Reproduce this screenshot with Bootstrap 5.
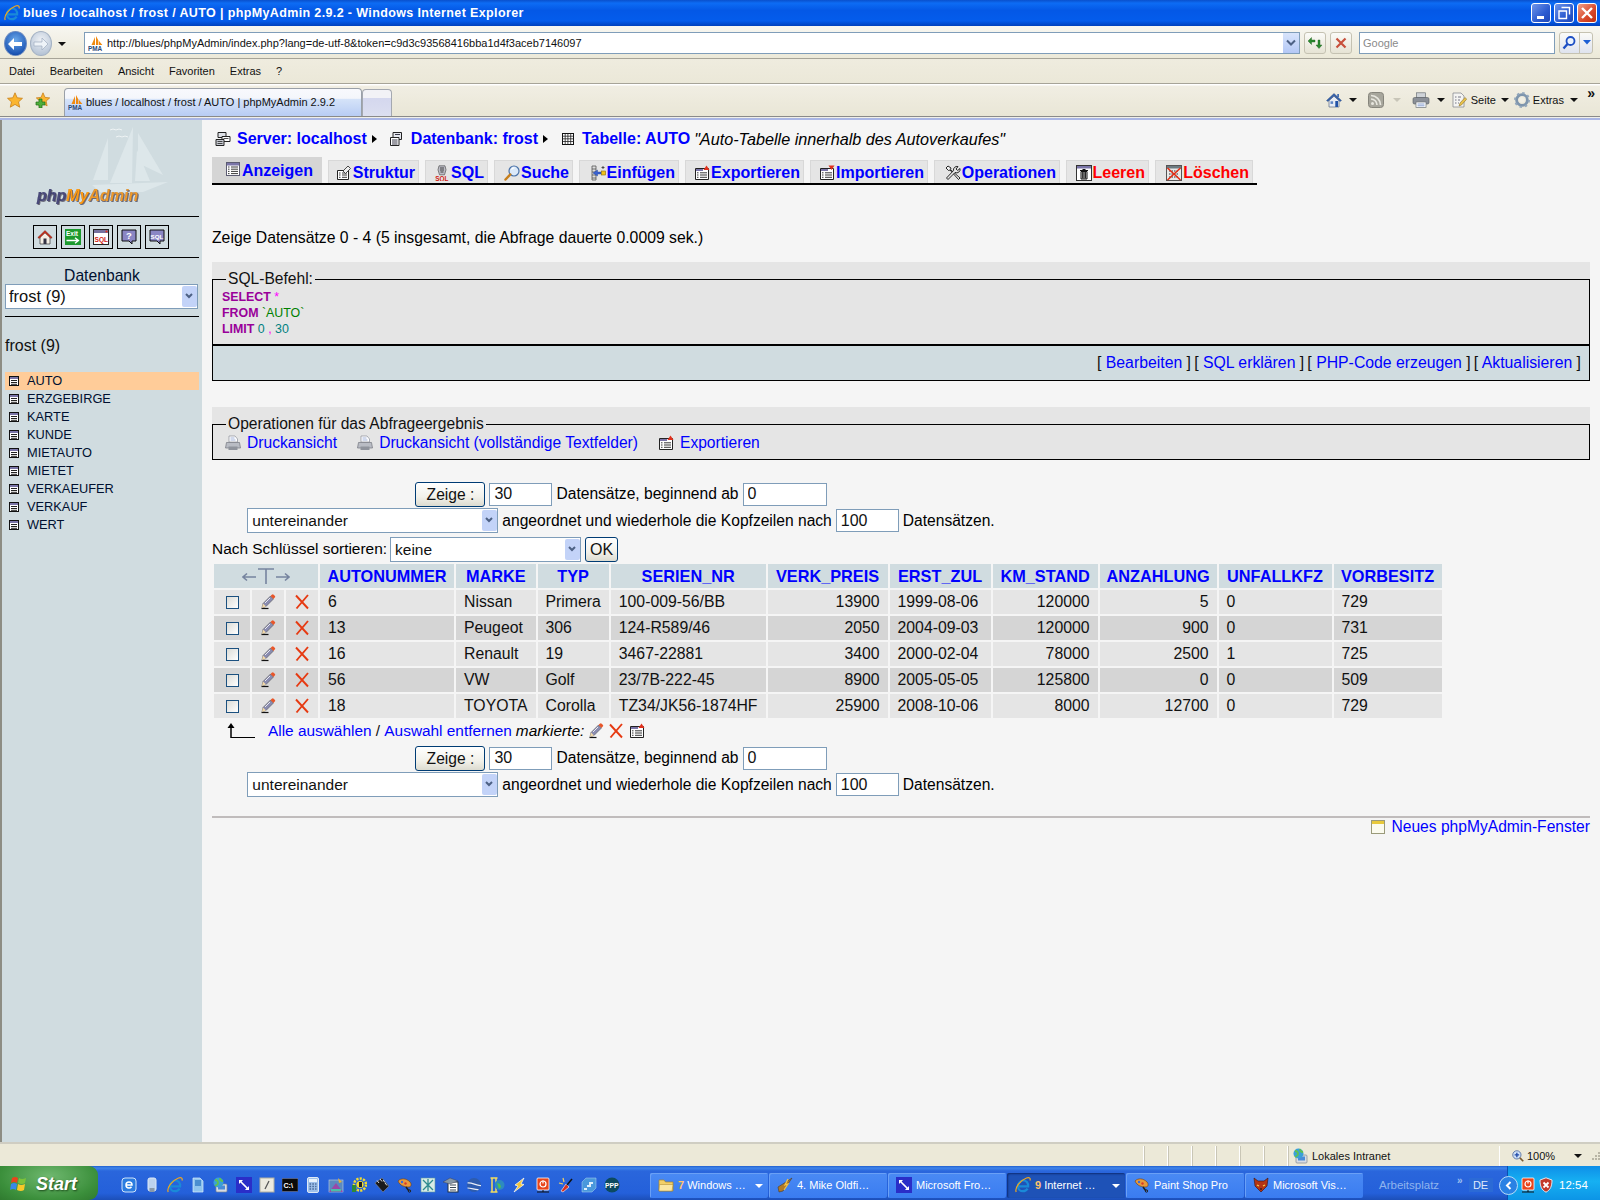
<!DOCTYPE html>
<html lang="de">
<head>
<meta charset="utf-8">
<title>blues / localhost / frost / AUTO | phpMyAdmin 2.9.2</title>
<link href="https://cdn.jsdelivr.net/npm/bootstrap@5.3.0/dist/css/bootstrap.min.css" rel="stylesheet">
<style>
html,body{height:1200px;overflow:hidden}
body{font:16px/18px "Liberation Sans",Arial,sans-serif;color:#000;background:#ece9d8}
a{color:#00f;text-decoration:none}
.app{width:1600px;height:1200px}
.i16{width:16px;height:16px;flex:none;display:inline-block}
.i12{width:12px;height:12px;flex:none}
.i10{width:10px;height:10px;flex:none}
.chrome{font:11px/14px "Liberation Sans",Arial,sans-serif;color:#111}
.caret-d{width:0;height:0;border:4px solid transparent;border-top-color:#111;border-bottom:0;flex:none}
.caret-d.faint{border-top-color:#c8c5b8}

/* title bar */
.titlebar{height:26px;background:linear-gradient(180deg,#0a50cc,#0d6cf4 12%,#0458e6 40%,#045cec 80%,#0040bc);color:#fff;font:700 12.5px/26px "Liberation Sans",Arial,sans-serif;letter-spacing:.37px;padding-left:4px;gap:3px}
.winbtns{margin-left:auto;gap:3px;padding-right:3px}
.winbtn{width:20px;height:20px;border:1px solid #fff;border-radius:3px;background:linear-gradient(135deg,#6f95ea,#2c5bd0 60%,#1f48b8)}
.winbtn.close{background:linear-gradient(135deg,#f0a088,#d8482a 60%,#c03010)}

/* address */
.addr{height:33px;background:linear-gradient(180deg,#f7f6f1,#ece9d8);border-bottom:1px solid #a7a498;padding-top:6px}
.navcaps{width:66px;padding-left:4px;gap:3px;margin-right:19px}
.navbtn{width:25px;height:25px;border-radius:50%;margin-top:-1px}
.navbtn.back{background:radial-gradient(circle at 50% 35%,#6aa8ea,#1c55b4 75%,#0f3a88);border:1px solid #6a8ac0}
.navbtn.fwd{background:radial-gradient(circle at 50% 35%,#eef1f5,#b6c4d6 80%);border:1px solid #a4b2c4}
.urlbox{width:1216px;height:22px;background:#fff;border:1px solid #7f9db9;padding-left:3px;gap:3px;font-size:11px;line-height:20px;margin-left:-1px}
.ddbtn{width:16px;height:20px;margin-left:auto;background:linear-gradient(#d8e4fb,#b4c8f6)}
.toolb{width:22px;height:22px;border:1px solid #c5c2b2;border-radius:3px;background:linear-gradient(#fbfbf8,#e6e3d4);margin-left:4px}
.toolb.s2{margin-left:4px}
.searchbox{width:196px;height:22px;background:#fff;border:1px solid #7f9db9;color:#8a8a8a;padding-left:3px;font-size:11px;line-height:20px;margin-left:7px}
.searchgo{width:34px;height:22px;border:1px solid #c5c2b2;border-radius:3px;background:linear-gradient(#fbfbf8,#dfe3ee);margin-left:4px}
.searchgo .cell{width:22px;height:20px;border-right:1px solid #c5c2b2}

/* menu */
.menubar{height:25px;background:linear-gradient(#efecdf,#ebe8d8);border-bottom:1px solid #a7a498;padding-left:9px;line-height:24px}
.menubar span{margin-right:15px}

/* toolbar */
.tabbar{height:32px;background:linear-gradient(#fff 0,#fff 1px,#f1eee3 2px,#e9e6d6);align-items:flex-end;position:relative}
.favs{gap:11px;padding:0 14px 8px 7px;align-self:flex-end}
.ietab{width:298px;height:28px;background:linear-gradient(#f8f9fd 0,#f4f6fb 35%,#d6e4f9 36%,#b8ccf4);border:1px solid #9aa0a8;border-bottom:0;border-radius:4px 4px 0 0;padding:0 0 2px 3px;gap:2px;font-size:11px;align-items:center}
.ietab2{width:30px;height:27px;background:linear-gradient(#f2f2f6 0,#f2f2f6 30%,#d4d7ee 31%,#dcdff0);border:1px solid #a4a8b0;border-bottom:0;border-radius:4px 4px 0 0}
.tools{margin-left:auto;padding:0 0 8px 0;align-items:center;position:relative}
.more{position:absolute;right:5px;top:3px;font:700 14px/12px "Liberation Sans",sans-serif}
.ml2{margin-left:2px}.ml3{margin-left:3px}.ml4{margin-left:4px}.ml5{margin-left:5px}.ml6{margin-left:6px}.ml7{margin-left:7px}.ml9{margin-left:9px}.ml11{margin-left:11px}.ml16{margin-left:16px}
.mr22{margin-right:22px}
.tabline{height:4px;background:linear-gradient(#8a8a8a 0,#8a8a8a 1px,#f0efe8 1px,#f0efe8 2px,#aab6e4 2px)}

/* page */
.page{min-height:0}
.side{width:202px;flex:none;background:#d0dce0;border-left:2px solid #8d8d84;color:#001030}
.logo{height:96px;display:block}
.logotext{filter:drop-shadow(1px 1px 0 #6a6a7a)}
.side hr{margin:0 3px;opacity:1;border:0;border-top:1px solid #000;height:1px}
.sideicons{height:40px;gap:4px;padding-right:2px}
.sidebox{width:24px;height:24px;border:1px solid #000}
.dbhead{height:17px;line-height:18px;padding-top:9px;font-size:15.7px;box-sizing:content-box}
.side .form-select{width:193px;margin:0 0 7px 3px;font-size:16.5px;padding-left:3px}
.count{margin:20px 0 17px 3px;height:18px;color:#111}
.tbls{font-size:12.8px;line-height:18px;margin:0 3px}
.tbls li{height:18px;padding-left:4px;gap:8px}
.tbls li.cur{background:#fc9}

.content{background:#f5f5f5;padding:9px 10px 0;min-width:0;font-size:15.6px}
.crumb{height:20px;font-weight:700;font-size:16px;line-height:20px;gap:4px;margin-left:3px}
.crumb i{font-style:italic;font-weight:400;font-size:16.2px}
.tri{width:0;height:0;border:4px solid transparent;border-left:5px solid #000;border-right:0;margin-left:1px}
.crumb .sp{margin-left:8px}
.pma-tabs{border-bottom:2px solid #000;margin-top:8px;width:1045px;height:28px;gap:6px;align-items:flex-end;flex-wrap:nowrap;padding:0}
.pma-tabs .nav-link{background:#e5e5e5;border:1px solid #d8d8d8;border-bottom:0;height:23px;font-weight:700;font-size:16px;color:#00f;padding:2px 3px 0 0;border-radius:0;display:flex;align-items:center;justify-content:flex-end;gap:1px;line-height:20px;margin:0}
.pma-tabs .nav-link.red{color:#f00}
.pma-tabs .nav-link.active{background:#d5d5d5;height:26px;align-items:flex-start;border-color:#d5d5d5;color:#00f;padding:3px 8px 0 0}
.t1{width:110px}.t2{width:91px}.t3{width:63px}.t4{width:79px}.t5{width:100px}.t6{width:119px}.t7{width:118px}.t8{width:126px}.t9{width:83px}.t10{width:98px}
.result{margin-top:44px;height:18px;font-size:15.75px}

.sqlbg{background:#e5e5e5;padding-top:8px;margin-top:15px}
.sqlbg fieldset,.opbg fieldset{border:1px solid #000;margin:0;padding:0 9px;min-width:0}
fieldset legend{float:none;width:auto;font-size:15.6px;line-height:18px;margin:0 0 0 4px;padding:0 2px;color:#111}
.sqlbg fieldset{border-bottom:2px solid #000;padding-bottom:7px}
.sql{font-size:12.4px;line-height:16px;font-weight:400;color:#909;padding-top:1px}
.sql b{color:#909}
.sql .p{color:#f0f}.sql .s{color:#008000}.sql .n{color:#008080}
.sqltools{height:35px;background:#d0dce0;border:1px solid #000;border-top:0;padding-right:8px;gap:.2em;line-height:34px;color:#111;font-size:15.8px}
.opbg{background:#e5e5e5;padding-top:8px;margin-top:26px}
.opbg fieldset{padding-bottom:7px}
.opbg legend{margin-bottom:1px}
.ops{height:18px;padding-left:3px;align-items:center}
.ops a{margin-left:6px;margin-right:20px}

.navform{width:818px;margin-top:21px}
.row-f{height:26.5px;gap:4px;align-items:center;justify-content:center}
.navform .form-control,.fs .form-control{height:23px;border:1px solid #7f9db9;border-radius:0;padding:0 4px;font-size:16px;line-height:21px;color:#111;background:#fff;min-height:0}
.inw-s{width:63px!important}.inw-m{width:84px!important}
.form-select{height:25px;border:1px solid #7f9db9;border-radius:0;padding:0 18px 0 4px;font-size:15.5px;line-height:23px;color:#111;background-color:#fff;background-image:url("data:image/svg+xml,%3Csvg xmlns='http://www.w3.org/2000/svg' width='16' height='23'%3E%3Crect x='1' y='1' width='15' height='21' rx='2' fill='%23c3d3f8'/%3E%3Cpath d='M5 9l3 3 3-3' fill='none' stroke='%234d6185' stroke-width='2'/%3E%3C/svg%3E");background-repeat:no-repeat;background-position:right 0 center;background-size:16px 23px}
.sel-l{width:251px!important}.sel-k{width:191px!important}
.btn-xp{height:25px;width:70px;padding:0;border:1px solid #003c74;border-radius:3px;background:linear-gradient(#fff,#f2f1ea 60%,#dcdbd0);font-size:15.6px;line-height:21px;color:#111}
.btn-xp.ok{width:33px;font-size:16px;margin-left:1px}
.btn-xp:hover{border-color:#003c74;color:#111}
.sortf{height:26px;gap:3px;margin-top:2px;align-items:center;font-size:15.45px}
.data.table{width:auto;table-layout:fixed;border-collapse:separate;border-spacing:2px;margin:0;font-size:15.8px;line-height:18px;color:#111}
.data.table>:not(caption)>*>*{padding:3px 8px;border:0;box-shadow:none;height:24px;background:transparent;color:#111;white-space:nowrap;vertical-align:middle}
.data.table>thead>tr>th{background:#d0dce0;font-weight:700;font-size:16.3px;text-align:center;padding:3px 0}
.data.table>thead a{color:#00f}
.data.table>tbody>tr:nth-child(odd)>td{background:#e5e5e5}
.data.table>tbody>tr:nth-child(even)>td{background:#d5d5d5}
.data.table>tbody>tr>td.act{padding:0 0 1px;text-align:center;line-height:0}
.c1{width:36px}.c2,.c3{width:32px}.c4{width:134px}.c5{width:75px}.c6{width:71px}.c7{width:154px}.c8{width:120px}.c9{width:101px}.c10{width:105px}.c11{width:117px}.c12{width:113px}.c13{width:108px}
.form-check-input.xp{width:13px;height:13px;margin:1px 0 0;border:1px solid #1c5180;border-radius:0;background:linear-gradient(135deg,#dcdcd7,#fff)}
.acts{height:22px;align-items:center;padding-left:15px;font-size:15.4px}
.acts .lk{margin-left:13px;color:#111;gap:0}
.acts em{margin-left:4px;margin-right:4px}
.navform.b{margin-top:3px}
.divider{border:0;border-top:2px solid #c0bcbc;opacity:1;margin:18px 0 0}
.newwin{height:18px;margin-top:0;gap:6px}

/* status */
.statusbar{height:24px;border-top:2px solid #cfcdc2;background:#ece9d8;position:relative;font-size:11px;line-height:22px;padding-top:1px}
.stat{width:24px;height:20px;border-right:1px solid #fff;box-shadow:1px 0 0 #c9c6b6}
.stat.first{width:1144px}
.zone{width:212px;padding-left:5px;gap:3px;border-right:1px solid #fff;height:20px}
.zoom{padding-left:12px;gap:3px;width:88px}
.grip{margin-left:auto;width:10px}

/* taskbar */
.taskbar{height:34px;background:linear-gradient(#1f5fd0 0,#3f85ea 2px,#2a66dc 5px,#2460da 80%,#1c4fb8);color:#fff;font-size:11px;flex:none}
.start{width:98px;height:34px;background:radial-gradient(ellipse at 50% 30%,#6fb86f,#3b8f3b 70%,#2f7a2f);border-radius:0 9px 9px 0;font:italic 700 18px/36px "Liberation Sans",sans-serif;color:#fff;text-shadow:1px 1px 2px #1b4a1b;padding:2px 0 0 10px;gap:6px}
.quick{gap:7px;margin:4px 0 0 23px;width:529px;position:relative}
.tb-btn{width:118px;height:25px;background:linear-gradient(#4a8af4,#3a7cf0);border-radius:2px;padding-left:8px;gap:4px;color:#fff;box-shadow:inset 1px 1px 0 #6aa0f6;position:relative;line-height:25px;white-space:nowrap}
.tb-btn.on{background:#1e52b7;box-shadow:inset 1px 1px 2px #0e2c74}
.tb-btn b{color:#ffc46a}
.caret-w{width:0;height:0;border:4px solid transparent;border-top-color:#fff;border-bottom:0;position:absolute;right:5px;top:11px}
.tasks{gap:1px;align-items:center;margin-top:4px}
.dim{color:#8fb4ee;margin:4px 0 0 16px;font-size:11.5px;width:58px}
.raq{color:#9fc0f0;margin:-4px 0 0 20px;font-weight:700;font-size:10px}
.lang{margin:4px 0 0 6px;background:#2b6ad6;padding:0 2px;color:#dfe9fb;width:24px}
.tray{margin-left:auto;width:93px;height:34px;background:linear-gradient(#0e8fe8,#16b0f2 45%,#0c94e6);border-left:1px solid #0a4fb0;gap:2px;padding-top:4px;position:relative;font-size:11.5px}
.chev{width:19px;height:19px;border-radius:50%;background:#2a82e4;border:1px solid #b8dcf8;margin-left:-9px;flex:none}
</style>
</head>
<body>
<svg width="0" height="0" class="position-absolute" aria-hidden="true">
<defs>
<symbol id="ie" viewBox="0 0 16 16"><path d="M3.5 9.3h9.6c.3-3.5-2-5.8-4.8-5.8S3 6 3 9.2s2.3 5 5 5c2.2 0 3.6-1 4.6-2.6" fill="none" stroke="#1a8ad8" stroke-width="2.2"/><path d="M1.2 15C-.5 11 5 3.5 11.5 1c2.8-1 4.2 0 3.5 2.5" fill="none" stroke="#f2a71c" stroke-width="1.2"/></symbol>
<symbol id="pma" viewBox="0 0 16 16"><path d="M3.5 10 7 2v8zM8 10V1l2.4 4.5V10zM11 10V6l3.4 4z" fill="#f08a10"/><text x="0" y="15.6" font-size="6.4" font-weight="700" font-family="Liberation Sans" fill="#2b4a78">PMA</text></symbol>
<symbol id="star" viewBox="0 0 16 16"><path d="M8 .8l2.2 5 5.3.5-4 3.6 1.2 5.3L8 12.400 3.300 15.200l1.200-5.300-4-3.600 5.300-.5z" fill="#fbb52f" stroke="#c8801a" stroke-width=".8"/></symbol>
<symbol id="starp" viewBox="0 0 16 16"><path d="M9 .8l2 4.600 4.700.5-3.600 3.200 1 4.800L9 11.500 4.900 13.900l1-4.800-3.600-3.200 4.700-.5z" fill="#fbb52f" stroke="#c8801a" stroke-width=".8"/><path d="M5 7v3H2v3h3v3h3v-3h3v-3H8V7z" fill="#4fae3a" stroke="#1f6d1a" stroke-width=".7"/></symbol>
<symbol id="home" viewBox="0 0 16 16"><path d="M3 8.500 8 4.200l5 4.300V15H3z" fill="#e8ecf4" stroke="#5a6a85" stroke-width=".7"/><path d="M.5 8.500 8 1.500l7.500 7-1.400 1L8 3.800 1.900 9.500z" fill="#3562ac" stroke="#1c3a74" stroke-width=".4"/><rect x="9.300" y="9" width="2.700" height="6" fill="#2353a6"/><rect x="4.500" y="9.300" width="2.600" height="2.600" fill="#5d84c4"/><rect x="11.300" y="2" width="1.600" height="3" fill="#3562ac"/></symbol>
<symbol id="rss" viewBox="0 0 16 16"><rect x=".5" y=".5" width="15" height="15" rx="3" fill="#a7a69c" stroke="#86857c"/><circle cx="4.500" cy="11.500" r="1.500" fill="#e8e7df"/><path d="M3 7a6 6 0 0 1 6 6M3 3.500A9.500 9.500 0 0 1 12.500 13" fill="none" stroke="#e8e7df" stroke-width="1.700"/></symbol>
<symbol id="print" viewBox="0 0 18 16"><rect x="4.500" y=".8" width="9" height="5" fill="#cfd3d8" stroke="#6c7278" stroke-width=".7"/><rect x="1" y="5.500" width="16" height="6.500" rx="1.500" fill="#8b9098" stroke="#555a60" stroke-width=".6"/><rect x="4" y="10" width="10" height="5.500" fill="#fff" stroke="#6c7278" stroke-width=".7"/><path d="M5.500 12h7M5.500 13.800h7" stroke="#5577bb" stroke-width=".7"/></symbol>
<symbol id="pagei" viewBox="0 0 16 16"><path d="M2 1h8l3 3v11H2z" fill="#f4f4f2" stroke="#7c8088" stroke-width=".7"/><path d="M4 5h1.500M7 5h3M4 8h1.500M7 8h2M4 11h1.500M7 11h1" stroke="#667" stroke-width=".9"/><path d="M8 14l1-3 5-5.500 1.700 1.700L10.500 13z" fill="#e9c24a" stroke="#7a6020" stroke-width=".5"/></symbol>
<symbol id="gear" viewBox="0 0 16 16"><circle cx="8" cy="8" r="5.400" fill="none" stroke="#7e95ad" stroke-width="2.800"/><circle cx="8" cy="8" r="7" fill="none" stroke="#93a7bb" stroke-width="2" stroke-dasharray="2.400 3.100"/><circle cx="8" cy="8" r="2.600" fill="#f1efe5"/></symbol>
<symbol id="tbl" viewBox="0 0 10 10"><rect x=".5" y=".5" width="9" height="9" fill="#fff" stroke="#111"/><rect x="1" y="1" width="8" height="2" fill="#7a75a8"/><path d="M2 4.500h6M2 6.500h6M2 8.300h6" stroke="#222"/></symbol>
<symbol id="side-home" viewBox="0 0 16 16"><path d="M3 8v7h10V8L8 3.500z" fill="#f4efe4" stroke="#333" stroke-width=".7"/><path d="M.8 8.500 8 1.500l7.200 7-1.300 1L8 3.800 2.100 9.500z" fill="#c7301c" stroke="#5a120a" stroke-width=".4"/><rect x="6.500" y="9.500" width="3" height="5.500" fill="#334"/></symbol>
<symbol id="side-exit" viewBox="0 0 16 16"><rect width="16" height="16" fill="#1c9a2e"/><text x="1" y="6.500" font-size="6.500" font-weight="700" font-family="Liberation Sans" fill="#fff">Exit</text><path d="M1.500 11.500h11M10 8.800l3.500 2.700-3.500 2.700" stroke="#fff" fill="none" stroke-width="1.300"/></symbol>
<symbol id="side-sql" viewBox="0 0 16 16"><rect x=".5" y=".5" width="15" height="15" fill="#fff" stroke="#222"/><rect x="1" y="1" width="14" height="3" fill="#77729f"/><circle cx="13.500" cy="2.500" r="1.100" fill="#e03020"/><text x="1.600" y="12.500" font-size="6.600" font-weight="700" font-family="Liberation Sans" fill="#d01810">SQL</text></symbol>
<symbol id="side-help" viewBox="0 0 16 16"><path d="M1 1h14v11h-4v3l-3-3H1z" fill="#8a86c4" stroke="#111"/><text x="5" y="10" font-size="9.500" font-weight="700" font-family="Liberation Sans" fill="#fff">?</text></symbol>
<symbol id="side-sqlq" viewBox="0 0 16 16"><path d="M1 1h14v11h-4v3l-3-3H1z" fill="#8a86c4" stroke="#111"/><text x="1.500" y="9.500" font-size="6.200" font-weight="700" font-family="Liberation Sans" fill="#fff">SQL</text></symbol>
<symbol id="srv" viewBox="0 0 16 16"><path d="M3 1.500h8v5H3z" fill="#dfe2e8" stroke="#222"/><path d="M7 5.500h8v5H7z" fill="#fff" stroke="#222"/><path d="M1 8.500h8v6H1z" fill="#c9ccd4" stroke="#222"/><path d="M2.500 10.500h5M2.500 12.500h5M8.500 7.500h5" stroke="#222" stroke-width=".8"/></symbol>
<symbol id="db" viewBox="0 0 16 16"><path d="M4 1.500h8.500v7H4z" fill="#e6e8ee" stroke="#222"/><path d="M1.500 6.500H10v8H1.500z" fill="#fff" stroke="#222"/><path d="M3 9h5.500M3 11h5.500M3 13h5.500M6 3.500h5" stroke="#223" stroke-width=".9"/></symbol>
<symbol id="tgrid" viewBox="0 0 16 16"><rect x="2.500" y="2.500" width="11" height="11" fill="#fff" stroke="#111"/><path d="M2.500 5.200h11M2.500 7.800h11M2.500 10.500h11M5.200 2.500v11M7.900 2.500v11M10.700 2.500v11" stroke="#222" stroke-width=".8"/></symbol>
<symbol id="t-browse" viewBox="0 0 16 16"><rect x="1.500" y="1.500" width="13" height="13" fill="#fff" stroke="#5c5c72"/><rect x="2" y="2" width="12" height="2.500" fill="#7a75a8"/><path d="M3 6h1.500M6 6h7M3 8.200h1.500M6 8.200h7M3 10.400h1.500M6 10.400h7M3 12.600h1.500M6 12.600h7" stroke="#222" stroke-width=".9"/></symbol>
<symbol id="t-struct" viewBox="0 0 16 16"><path d="M1.500 5.500h11v9h-11z" fill="#fff" stroke="#222"/><path d="M3 8h1.500M6 8h5M3 10h1.500M6 10h5M3 12.300h1.500M6 12.300h5" stroke="#222" stroke-width=".9"/><path d="M7 6l5-5 2.500 2.500-5 5z" fill="#eee" stroke="#222" stroke-width=".8"/></symbol>
<symbol id="t-sql" viewBox="0 0 16 16"><path d="M5 .8h6l1 4-1.500 5h-5L4 4.800z" fill="#bdbdc6" stroke="#555" stroke-width=".7"/><path d="M6 3h4M6 5h4M6.500 7h3" stroke="#333" stroke-width=".9"/><text x="1.300" y="15.500" font-size="6.400" font-weight="700" font-family="Liberation Sans" fill="#d01810">SQL</text></symbol>
<symbol id="t-search" viewBox="0 0 16 16"><circle cx="10" cy="6" r="5" fill="#dbe9f9" stroke="#4a72a8" stroke-width="1.200"/><path d="M7.500 4.500a3 3 0 0 1 3-1.500" stroke="#fff" fill="none" stroke-width="1.200"/><path d="M6.200 9.500 1.500 14.500" stroke="#c67e1c" stroke-width="2.500" stroke-linecap="round"/></symbol>
<symbol id="t-insert" viewBox="0 0 16 16"><path d="M2 1h4v14H2z" fill="#ddd" stroke="#555" stroke-width=".8"/><path d="M2 4h4M2 7h4M2 10h4M2 13h4" stroke="#444" stroke-width=".7"/><path d="M11 7H7.500V5L3 8l4.500 3V9H11z" fill="#3a62d0" stroke="#173a9a" stroke-width=".4"/><rect x="11.500" y="6" width="4" height="4" fill="#f2c21a" stroke="#84640a" stroke-width=".6"/><path d="M13 1v3M11.500 2.500h3" stroke="#333" stroke-width=".8"/></symbol>
<symbol id="t-export" viewBox="0 0 16 16"><path d="M1.500 3.500h13v11h-13z" fill="#fff" stroke="#222"/><path d="M2 4h7v2H2z" fill="#7a75a8"/><path d="M3 7.800h1.500M6 7.800h7M3 10h1.500M6 10h7M3 12.300h1.500M6 12.300h7" stroke="#222" stroke-width=".9"/><path d="M12.500 .5 15.500 5h-6z" fill="#e0301c"/></symbol>
<symbol id="t-import" viewBox="0 0 16 16"><path d="M1.500 3.500h13v11h-13z" fill="#fff" stroke="#222"/><path d="M2 4h7v2H2z" fill="#7a75a8"/><path d="M3 7.800h1.500M6 7.800h7M3 10h1.500M6 10h7M3 12.300h1.500M6 12.300h7" stroke="#222" stroke-width=".9"/><path d="M12.500 5 15.500 .5h-6z" fill="#e0301c"/></symbol>
<symbol id="t-ops" viewBox="0 0 16 16"><path d="M3 1 1 3l2.500 2.500 1.500-.5 8.500 9.500 1.500-1.500L5.500 4.500 6 3z" fill="#f3f3f3" stroke="#111" stroke-width=".9"/><path d="M15 3.500 12.700 5.500 11 4l2-2.400a3.500 3.500 0 0 0-4.500 4L1.500 13l1.500 1.500 7-7a3.500 3.500 0 0 0 5-4z" fill="#e6e6e6" stroke="#111" stroke-width=".9"/></symbol>
<symbol id="t-empty" viewBox="0 0 16 16"><rect x=".5" y=".5" width="15" height="15" fill="#fff" stroke="#333"/><rect x="1" y="1" width="14" height="2.500" fill="#7a75a8"/><path d="M4 5.500h8M5 6.500v7.500h6V6.500zM6.700 7v6.500M8 7v6.500M9.400 7v6.500M6.500 4.500h3" stroke="#111" fill="#ddd"/></symbol>
<symbol id="t-drop" viewBox="0 0 16 16"><rect x=".5" y=".5" width="15" height="15" fill="#e8e8e8" stroke="#555"/><rect x="1" y="1" width="14" height="2.500" fill="#6c7a80"/><path d="M3 6h10M3 9h10M3 12h10" stroke="#333" stroke-dasharray="1.500 1"/><path d="M1.500 3 14.500 15M14.500 3 1.500 15" stroke="#e52a10" stroke-width="1.500"/></symbol>
<symbol id="pen" viewBox="0 0 16 16"><path d="M1.500 14.500h7" stroke="#111" stroke-width="1.200"/><path d="M2 14l1-4.500L10.500 2l3 3L6 12.500z" fill="#8a8cb0" stroke="#444" stroke-width=".5"/><path d="M10.500 2l1.300-1.300a1.300 1.300 0 0 1 1.900 0l1 1a1.300 1.300 0 0 1 0 1.900L13.500 5z" fill="#e8562a"/><path d="M2 14l1-4.500 3 3z" fill="#f2d9a8"/><path d="M5 9l5-5" stroke="#e9e9f2"/></symbol>
<symbol id="xred" viewBox="0 0 16 16"><path d="M2 1.500 14 14.500M14 1 2.500 14.500" stroke="#e63a12" stroke-width="1.900" fill="none"/></symbol>
<symbol id="printg" viewBox="0 0 16 16"><path d="M4 1h6l2.500 3v3H4z" fill="#fff" stroke="#8a8e98" stroke-width=".7"/><path d="M5.500 3h4M5.500 5h5" stroke="#7d92c8" stroke-width=".7"/><path d="M1.500 7.500h13l1 5.500H.5z" fill="#b9bcc4" stroke="#74777f" stroke-width=".7"/><rect x="3.500" y="11.500" width="9" height="3.500" fill="#8f939c"/></symbol>
<symbol id="newwin" viewBox="0 0 16 16"><rect x="1.500" y="1.500" width="13" height="13" fill="#fbfbef" stroke="#9a9a7a"/><rect x="2" y="2" width="12" height="3" fill="#e8c93a"/></symbol>
<symbol id="folder" viewBox="0 0 16 16"><path d="M1 3h5l1.500 2H15v9H1z" fill="#f2cf68" stroke="#a9842a" stroke-width=".7"/><path d="M1.500 7.500H15l-1 6.500H1z" fill="#fae6a2" stroke="#a9842a" stroke-width=".5"/></symbol>
<symbol id="bolt" viewBox="0 0 16 16"><path d="M1 10 9 5l6-4-4 6-5 7-4 1z" fill="#b07a28" stroke="#4a3a2a" stroke-width=".6"/><path d="M11 2 8 8l3-1-4 6" fill="none" stroke="#f4c448" stroke-width="1.300"/></symbol>
<symbol id="fp" viewBox="0 0 16 16"><rect width="16" height="16" fill="#2a2ec8"/><path d="M3 3h4L5.600 4.400l6 6L13 9v4H9l1.400-1.400-6-6L3 7z" fill="#fff"/></symbol>
<symbol id="palette" viewBox="0 0 16 16"><path d="M1 4c3-3 8-3 12 1 2 2 1 5-1 5-4 0-9-1-11-6z" fill="#e89a3c" stroke="#6a3a10" stroke-width=".6"/><circle cx="5" cy="5" r="1.200" fill="#3a6ad8"/><circle cx="8.500" cy="6.500" r="1.200" fill="#d83a2a"/><path d="M9 10l3 4" stroke="#222" stroke-width="1.500"/><circle cx="12.500" cy="14" r="1.200" fill="none" stroke="#222"/></symbol>
<symbol id="fox" viewBox="0 0 16 16"><path d="M1 1l4 3h6l4-3-1 8-6 6-6-6z" fill="#b43414" stroke="#3a1006" stroke-width=".6"/><path d="M4 8l2 1M12 8l-2 1" stroke="#f4d04a" stroke-width="1.300"/><path d="M7 12h2" stroke="#111"/></symbol>
<symbol id="globe-net" viewBox="0 0 16 16"><rect x="3" y="7" width="11" height="8" rx="1" fill="#d7dce4" stroke="#7f8690" stroke-width=".7"/><rect x="5" y="8.500" width="7" height="4" fill="#4a8cd8"/><circle cx="5.500" cy="5.500" r="5" fill="#3aa0d8"/><path d="M2 3c2 0 3 1 3 3s-2 2-3 3M7 1c0 2 1 3 3 3" fill="none" stroke="#5ec054" stroke-width="1.800"/></symbol>
<symbol id="zoomi" viewBox="0 0 16 16"><circle cx="6.500" cy="6.500" r="5.500" fill="#cfe0f6" stroke="#3a5a94"/><path d="M6.500 3.500v6M3.500 6.500h6" stroke="#204aa8" stroke-width="1.800"/><path d="M10.500 10.500 15 15" stroke="#7a5a30" stroke-width="2.200"/></symbol>
<symbol id="shield" viewBox="0 0 16 16"><path d="M8 .8 14 3c0 6-1.500 10-6 12.200C3.500 13 2 9 2 3z" fill="#c33a2a" stroke="#dfe6f0"/><path d="M5.500 5.500l5 5M10.500 5.500l-5 5" stroke="#fff" stroke-width="1.800"/></symbol>
<symbol id="power" viewBox="0 0 16 16"><rect x="2" y="1" width="12" height="12" rx="1" fill="#e8451c" stroke="#fff" stroke-width=".8"/><circle cx="8" cy="7" r="3" fill="none" stroke="#fff" stroke-width="1.200"/><path d="M8 3.500v3" stroke="#fff" stroke-width="1.200"/><path d="M2 15h12M8 13v2" stroke="#111"/></symbol>
<symbol id="q1" viewBox="0 0 16 16"><rect x="1" y="1" width="14" height="14" rx="3" fill="#2c7ce0" stroke="#cfe3fb"/><path d="M5 8h6c0-2-1-3-3-3s-3 1.500-3 3 1 3 3 3c1 0 2-.5 2.500-1.200" fill="none" stroke="#fff" stroke-width="1.500"/></symbol>
<symbol id="q2" viewBox="0 0 16 16"><rect x="4" y="1" width="8" height="13" rx="2" fill="#bcd2ee" stroke="#dfe9f6"/><rect x="5.500" y="11" width="5" height="4" fill="#8899aa"/></symbol>
<symbol id="q4" viewBox="0 0 16 16"><path d="M3 1h7l3 3v11H3z" fill="#8fc4ee" stroke="#dbeefb" stroke-width=".7"/><rect x="5" y="3" width="6" height="6" fill="#4a8ed0"/></symbol>
<symbol id="q7" viewBox="0 0 16 16"><rect x="1" y="1" width="14" height="14" fill="#eceadf" stroke="#b0aea0"/><path d="M6 12l4-8" stroke="#555" stroke-width="1.200"/></symbol>
<symbol id="q8" viewBox="0 0 16 16"><rect y="1.500" width="16" height="13" fill="#0a0a0a" stroke="#889" stroke-width=".5"/><text x="1.400" y="10.500" font-size="7.200" font-weight="700" font-family="Liberation Sans" fill="#fff">C:\</text></symbol>
<symbol id="q9" viewBox="0 0 16 16"><rect x="2.500" y=".5" width="11" height="15" rx="1.500" fill="#9ec0ea" stroke="#dfe9f6"/><rect x="4" y="2" width="8" height="3" fill="#e8f2fc"/><path d="M4.500 7h7M4.500 9.500h7M4.500 12h7" stroke="#4a6a9a" stroke-dasharray="1.600 1.200" stroke-width="1.300"/></symbol>
<symbol id="q10" viewBox="0 0 16 16"><rect x="1" y="3" width="14" height="12" fill="#5b8ac0" stroke="#c4d0de" stroke-width=".6"/><path d="M1 15 8 6l7 9z" fill="#9a48a8"/><path d="M10 1l4 4-3 1z" fill="#e8b23a"/><rect x="3" y="12" width="10" height="2.500" fill="#4ac0a8"/></symbol>
<symbol id="q11" viewBox="0 0 16 16"><circle cx="9" cy="7.500" r="6" fill="none" stroke="#f2dc30" stroke-width="2.500" stroke-dasharray="2.200 1.200"/><circle cx="9" cy="7.500" r="3.600" fill="#f2dc30"/><rect x="1" y="8" width="4" height="7" fill="#2c8a3a"/><rect x="8" y="5" width="3" height="5" fill="#222"/></symbol>
<symbol id="q12" viewBox="0 0 16 16"><path d="M1 6 8 1l7 8-6 6z" fill="#1a1a1a" stroke="#999" stroke-width=".5"/><path d="M3 3.500 5 6M6 2 8 4.500M9 3l2 2.500M11 6l2 2.500" stroke="#ddd" stroke-width="1"/></symbol>
<symbol id="q14" viewBox="0 0 16 16"><rect x="1" y="1" width="14" height="14" fill="#d7ece6" stroke="#5f96a0" stroke-width=".6"/><path d="M3 3l10 10M13 3 3 13M8 2v12" stroke="#2d8b8e" stroke-width="1.300"/></symbol>
<symbol id="q15" viewBox="0 0 16 16"><rect x="5" y="5" width="10" height="10" fill="#fff" stroke="#234"/><path d="M7 8h6M7 10.500h6M7 13h6" stroke="#234" stroke-width=".9"/><path d="M0 5 7 1l8 3-8 3z" fill="#8798a6" stroke="#334" stroke-width=".4"/></symbol>
<symbol id="q16" viewBox="0 0 16 16"><circle cx="8" cy="8" r="7" fill="#2d5cae"/><path d="M1.500 6c4-1 9 3 13.500 2.500M1.500 11c4 0 8 2 11 1.500" stroke="#e8eef8" stroke-width="1.200" fill="none"/></symbol>
<symbol id="q17" viewBox="0 0 16 16"><path d="M1.500 1h7M1.500 15h7M3 1v14M7 1v14" stroke="#f2dc60" stroke-width="1.500"/><circle cx="10.500" cy="8" r="5" fill="#2e8ac0"/><path d="M8 6l3 1 1 3-2 2z" fill="#4ec054"/></symbol>
<symbol id="q18" viewBox="0 0 16 16"><path d="M2 15 6 9 3 8l9-7-3 6 3 .5z" fill="#f2c63a" stroke="#fff" stroke-width=".7"/></symbol>
<symbol id="q20" viewBox="0 0 16 16"><path d="M3 14 8 7l3 3-6 5z" fill="#d8301c" stroke="#fff" stroke-width=".6"/><path d="M9 8l5-6" stroke="#111" stroke-width="1.500"/><path d="M1 6l4 1M5 1l1 4" stroke="#f2d060" stroke-width="1.200"/></symbol>
<symbol id="q21" viewBox="0 0 16 16"><path d="M1 15V5l4-4h10v10l-4 4z" fill="#4a98dc" stroke="#b0d4f2" stroke-width=".5"/><path d="M6 9h3V6h3M3 12h3" stroke="#dfeffc" stroke-width="2"/></symbol>
<symbol id="q22" viewBox="0 0 16 16"><circle cx="8" cy="8" r="7.500" fill="#0c4a60"/><text x="1" y="10.500" font-size="6.800" font-weight="700" font-family="Liberation Sans" fill="#fff">PPP</text></symbol>
</defs>
</svg>

<div class="app d-flex flex-column">
  <!-- Titelleiste -->
  <div class="titlebar d-flex align-items-center">
    <svg class="i16"><use href="#ie"/></svg>
    <span>blues / localhost / frost / AUTO | phpMyAdmin 2.9.2 - Windows Internet Explorer</span>
    <div class="winbtns d-flex">
      <div class="winbtn d-flex align-items-end justify-content-center"><svg width="10" height="6"><rect x="1" y="0" width="7" height="3" fill="#fff"/></svg></div>
      <div class="winbtn d-flex align-items-center justify-content-center"><svg width="14" height="14"><path d="M4.500 1.500h8v7M2 5h7.500v7.500H2z" fill="none" stroke="#fff" stroke-width="1.400"/></svg></div>
      <div class="winbtn close d-flex align-items-center justify-content-center"><svg width="14" height="14"><path d="M2 2l10 10M12 2 2 12" stroke="#fff" stroke-width="2.400"/></svg></div>
    </div>
  </div>
  <!-- Adresszeile -->
  <div class="addr chrome d-flex align-items-start">
    <div class="navcaps d-flex align-items-center">
      <div class="navbtn back d-flex align-items-center justify-content-center"><svg width="16" height="14"><path d="M1 7l6-6v4h8v4H7v4z" fill="#fff"/></svg></div>
      <div class="navbtn fwd d-flex align-items-center justify-content-center"><svg width="16" height="14"><path d="M15 7 9 1v4H1v4h8v4z" fill="#eef3f8" stroke="#9dacc0" stroke-width=".7"/></svg></div>
      <div class="caret-d ml3"></div>
    </div>
    <div class="urlbox d-flex align-items-center">
      <svg class="i16"><use href="#pma"/></svg>
      <span>http://blues/phpMyAdmin/index.php?lang=de-utf-8&amp;token=c9d3c93568416bba1d4f3aceb7146097</span>
      <div class="ddbtn d-flex align-items-center justify-content-center"><svg width="10" height="8"><path d="M1 1.500 5 5.500 9 1.500" fill="none" stroke="#4d6185" stroke-width="2"/></svg></div>
    </div>
    <div class="toolb d-flex align-items-center justify-content-center"><svg class="i16"><path d="M1 6l3.500-3.500V5H8v2H4.500v2.500zM15 10l-3 3.500-3-3.500h2V5h2v5z" fill="#2b8a2e" stroke="#1a5c1c" stroke-width=".4"/></svg></div>
    <div class="toolb s2 d-flex align-items-center justify-content-center"><svg class="i12"><path d="M1.500 1.500l9 9M10.500 1.500l-9 9" stroke="#c8503c" stroke-width="2.200"/></svg></div>
    <div class="searchbox">Google</div>
    <div class="searchgo d-flex align-items-center"><div class="cell d-flex align-items-center justify-content-center"><svg class="i16"><circle cx="9.500" cy="6" r="4" fill="#eaf2fc" stroke="#1d4fc4" stroke-width="1.800"/><path d="M6.500 9 2.500 13.500" stroke="#1d4fc4" stroke-width="2.400"/></svg></div><svg width="10" height="6" class="ml3"><path d="M0 0h8L4 4.500z" fill="#1d5fd4"/></svg></div>
  </div>
  <!-- Menü -->
  <div class="menubar chrome">
    <span>Datei</span><span>Bearbeiten</span><span>Ansicht</span><span>Favoriten</span><span>Extras</span><span>?</span>
  </div>
  <!-- Registerkarten -->
  <div class="tabbar chrome d-flex">
    <div class="favs d-flex"><svg class="i16"><use href="#star"/></svg><svg class="i16"><use href="#starp"/></svg></div>
    <div class="ietab d-flex"><svg class="i16"><use href="#pma"/></svg><span>blues / localhost / frost / AUTO | phpMyAdmin 2.9.2</span></div>
    <div class="ietab2"></div>
    <div class="tools d-flex mr22">
      <svg class="i16"><use href="#home"/></svg><div class="caret-d ml7"></div>
      <svg class="i16 ml11"><use href="#rss"/></svg><div class="caret-d faint ml9"></div>
      <svg class="ml11" width="18" height="16"><use href="#print"/></svg><div class="caret-d ml7"></div>
      <svg class="i16 ml6"><use href="#pagei"/></svg><span class="ml4">Seite</span><div class="caret-d ml5"></div>
      <svg class="i16 ml5"><use href="#gear"/></svg><span class="ml3">Extras</span><div class="caret-d ml6"></div>
    </div>
    <span class="more">»</span>
  </div>
  <div class="tabline"></div>

  <!-- Seite -->
  <div class="page d-flex flex-grow-1">
    <aside class="side">
      <svg class="logo" width="200" height="96" viewBox="0 0 200 96">
        <g fill="#dde7ea">
          <path d="M131 7 108 63h22zM106 18 91 60h15zM136 13 161 55 136 43zM135 30 148 61H133zM90 65 166 62 141 72H98z"/>
          <path d="M108 10q3-2 6 0 3-2 6 0M114 17q3-2 6 0 3-2 6 0" fill="none" stroke="#eef3f4"/>
        </g>
        <text class="logotext" x="35" y="81" font-family="Liberation Sans" font-size="16" font-style="italic" font-weight="700" fill="#4a4a7c" stroke="#20204a" stroke-width=".2">php<tspan fill="#ff9c14" stroke="#a85a00">My</tspan><tspan fill="#f09a28" stroke="#705a60">Admin</tspan></text>
      </svg>
      <hr>
      <div class="sideicons d-flex align-items-center justify-content-center">
        <div class="sidebox d-flex align-items-center justify-content-center"><svg class="i16"><use href="#side-home"/></svg></div>
        <div class="sidebox d-flex align-items-center justify-content-center"><svg class="i16"><use href="#side-exit"/></svg></div>
        <div class="sidebox d-flex align-items-center justify-content-center"><svg class="i16"><use href="#side-sql"/></svg></div>
        <div class="sidebox d-flex align-items-center justify-content-center"><svg class="i16"><use href="#side-help"/></svg></div>
        <div class="sidebox d-flex align-items-center justify-content-center"><svg class="i16"><use href="#side-sqlq"/></svg></div>
      </div>
      <hr>
      <div class="dbhead text-center">Datenbank</div>
      <select class="form-select d-block"><option>frost (9)</option></select>
      <hr>
      <div class="count">frost (9)</div>
      <ul class="tbls list-unstyled">
        <li class="cur d-flex align-items-center"><svg class="i10"><use href="#tbl"/></svg>AUTO</li>
        <li class="d-flex align-items-center"><svg class="i10"><use href="#tbl"/></svg>ERZGEBIRGE</li>
        <li class="d-flex align-items-center"><svg class="i10"><use href="#tbl"/></svg>KARTE</li>
        <li class="d-flex align-items-center"><svg class="i10"><use href="#tbl"/></svg>KUNDE</li>
        <li class="d-flex align-items-center"><svg class="i10"><use href="#tbl"/></svg>MIETAUTO</li>
        <li class="d-flex align-items-center"><svg class="i10"><use href="#tbl"/></svg>MIETET</li>
        <li class="d-flex align-items-center"><svg class="i10"><use href="#tbl"/></svg>VERKAEUFER</li>
        <li class="d-flex align-items-center"><svg class="i10"><use href="#tbl"/></svg>VERKAUF</li>
        <li class="d-flex align-items-center"><svg class="i10"><use href="#tbl"/></svg>WERT</li>
      </ul>
    </aside>

    <main class="content flex-grow-1">
      <div class="crumb d-flex align-items-center">
        <svg class="i16"><use href="#srv"/></svg><a href="#" class="ml2">Server: localhost</a><span class="tri"></span>
        <svg class="i16 sp"><use href="#db"/></svg><a href="#" class="ml2">Datenbank: frost</a><span class="tri"></span>
        <svg class="i16 sp"><use href="#tgrid"/></svg><a href="#" class="ml2">Tabelle: AUTO</a><i>"Auto-Tabelle innerhalb des Autoverkaufes"</i>
      </div>
      <ul class="nav pma-tabs">
        <li class="nav-item"><a class="nav-link active t1" href="#"><svg class="i16"><use href="#t-browse"/></svg>Anzeigen</a></li>
        <li class="nav-item"><a class="nav-link t2" href="#"><svg class="i16"><use href="#t-struct"/></svg>Struktur</a></li>
        <li class="nav-item"><a class="nav-link t3" href="#"><svg class="i16"><use href="#t-sql"/></svg>SQL</a></li>
        <li class="nav-item"><a class="nav-link t4" href="#"><svg class="i16"><use href="#t-search"/></svg>Suche</a></li>
        <li class="nav-item"><a class="nav-link t5" href="#"><svg class="i16"><use href="#t-insert"/></svg>Einfügen</a></li>
        <li class="nav-item"><a class="nav-link t6" href="#"><svg class="i16"><use href="#t-export"/></svg>Exportieren</a></li>
        <li class="nav-item"><a class="nav-link t7" href="#"><svg class="i16"><use href="#t-import"/></svg>Importieren</a></li>
        <li class="nav-item"><a class="nav-link t8" href="#"><svg class="i16"><use href="#t-ops"/></svg>Operationen</a></li>
        <li class="nav-item"><a class="nav-link red t9" href="#"><svg class="i16"><use href="#t-empty"/></svg>Leeren</a></li>
        <li class="nav-item"><a class="nav-link red t10" href="#"><svg class="i16"><use href="#t-drop"/></svg>Löschen</a></li>
      </ul>
      <div class="result">Zeige Datensätze 0 - 4 (5 insgesamt, die Abfrage dauerte 0.0009 sek.)</div>

      <div class="sqlbg">
        <fieldset>
          <legend>SQL-Befehl:</legend>
          <div class="sql"><b>SELECT</b> <span class="p">*</span><br><b>FROM</b> <span class="s">`AUTO`</span><br><b>LIMIT</b> <span class="n">0</span> <span class="p">,</span> <span class="n">30</span></div>
        </fieldset>
      </div>
      <div class="sqltools d-flex justify-content-end">
        <span>[ <a href="#">Bearbeiten</a> ]</span><span>[ <a href="#">SQL erklären</a> ]</span><span>[ <a href="#">PHP-Code erzeugen</a> ]</span><span>[ <a href="#">Aktualisieren</a> ]</span>
      </div>

      <div class="opbg">
        <fieldset>
          <legend>Operationen für das Abfrageergebnis</legend>
          <div class="ops d-flex">
            <svg class="i16"><use href="#printg"/></svg><a href="#">Druckansicht</a>
            <svg class="i16"><use href="#printg"/></svg><a href="#">Druckansicht (vollständige Textfelder)</a>
            <svg class="i16"><use href="#t-export"/></svg><a href="#">Exportieren</a>
          </div>
        </fieldset>
      </div>

      <form class="navform">
        <div class="row-f d-flex">
          <button type="button" class="btn btn-xp">Zeige :</button>
          <input class="form-control inw-s" value="30"><span>Datensätze, beginnend ab</span><input class="form-control inw-m" value="0">
        </div>
        <div class="row-f d-flex">
          <select class="form-select sel-l"><option>untereinander</option></select>
          <span>angeordnet und wiederhole die Kopfzeilen nach</span><input class="form-control inw-s" value="100"><span>Datensätzen.</span>
        </div>
      </form>
      <div class="sortf d-flex fs">
        <span>Nach Schlüssel sortieren:</span><select class="form-select sel-k"><option>keine</option></select><button type="button" class="btn btn-xp ok">OK</button>
      </div>

      <table class="table data">
        <colgroup><col class="c1"><col class="c2"><col class="c3"><col class="c4"><col class="c5"><col class="c6"><col class="c7"><col class="c8"><col class="c9"><col class="c10"><col class="c11"><col class="c12"><col class="c13"></colgroup>
        <thead>
          <tr>
            <th colspan="3"><svg width="48" height="18" viewBox="0 0 48 18" class="d-block mx-auto"><g fill="none" stroke="#76849f" stroke-width="1.600"><path d="M1 10h13M5 6.500 1 10l4 3.500M47 10H34M43 6.500l4 3.500-4 3.500M16 2h16M24 2v15"/></g></svg></th>
            <th><a href="#">AUTONUMMER</a></th><th><a href="#">MARKE</a></th><th><a href="#">TYP</a></th><th><a href="#">SERIEN_NR</a></th><th><a href="#">VERK_PREIS</a></th><th><a href="#">ERST_ZUL</a></th><th><a href="#">KM_STAND</a></th><th><a href="#">ANZAHLUNG</a></th><th><a href="#">UNFALLKFZ</a></th><th><a href="#">VORBESITZ</a></th>
          </tr>
        </thead>
        <tbody>
          <tr><td class="act"><input type="checkbox" class="form-check-input xp"></td><td class="act"><svg class="i16"><use href="#pen"/></svg></td><td class="act"><svg class="i16"><use href="#xred"/></svg></td><td>6</td><td>Nissan</td><td>Primera</td><td>100-009-56/BB</td><td class="text-end">13900</td><td>1999-08-06</td><td class="text-end">120000</td><td class="text-end">5</td><td>0</td><td>729</td></tr>
          <tr><td class="act"><input type="checkbox" class="form-check-input xp"></td><td class="act"><svg class="i16"><use href="#pen"/></svg></td><td class="act"><svg class="i16"><use href="#xred"/></svg></td><td>13</td><td>Peugeot</td><td>306</td><td>124-R589/46</td><td class="text-end">2050</td><td>2004-09-03</td><td class="text-end">120000</td><td class="text-end">900</td><td>0</td><td>731</td></tr>
          <tr><td class="act"><input type="checkbox" class="form-check-input xp"></td><td class="act"><svg class="i16"><use href="#pen"/></svg></td><td class="act"><svg class="i16"><use href="#xred"/></svg></td><td>16</td><td>Renault</td><td>19</td><td>3467-22881</td><td class="text-end">3400</td><td>2000-02-04</td><td class="text-end">78000</td><td class="text-end">2500</td><td>1</td><td>725</td></tr>
          <tr><td class="act"><input type="checkbox" class="form-check-input xp"></td><td class="act"><svg class="i16"><use href="#pen"/></svg></td><td class="act"><svg class="i16"><use href="#xred"/></svg></td><td>56</td><td>VW</td><td>Golf</td><td>23/7B-222-45</td><td class="text-end">8900</td><td>2005-05-05</td><td class="text-end">125800</td><td class="text-end">0</td><td>0</td><td>509</td></tr>
          <tr><td class="act"><input type="checkbox" class="form-check-input xp"></td><td class="act"><svg class="i16"><use href="#pen"/></svg></td><td class="act"><svg class="i16"><use href="#xred"/></svg></td><td>18</td><td>TOYOTA</td><td>Corolla</td><td>TZ34/JK56-1874HF</td><td class="text-end">25900</td><td>2008-10-06</td><td class="text-end">8000</td><td class="text-end">12700</td><td>0</td><td>729</td></tr>
        </tbody>
      </table>
      <div class="acts d-flex">
        <svg width="28" height="16"><path d="M4 15V3" stroke="#000" stroke-width="1.500"/><path d="M4 0 .5 5h7z" fill="#000"/><path d="M4 14.500h24" stroke="#000"/></svg>
        <span class="lk d-flex"><a href="#">Alle auswählen</a>&nbsp;/&nbsp;<a href="#">Auswahl entfernen</a></span>
        <em>markierte:</em>
        <svg class="i16"><use href="#pen"/></svg><svg class="i16 ml4"><use href="#xred"/></svg><svg class="i16 ml5"><use href="#t-export"/></svg>
      </div>
      <form class="navform b">
        <div class="row-f d-flex">
          <button type="button" class="btn btn-xp">Zeige :</button>
          <input class="form-control inw-s" value="30"><span>Datensätze, beginnend ab</span><input class="form-control inw-m" value="0">
        </div>
        <div class="row-f d-flex">
          <select class="form-select sel-l"><option>untereinander</option></select>
          <span>angeordnet und wiederhole die Kopfzeilen nach</span><input class="form-control inw-s" value="100"><span>Datensätzen.</span>
        </div>
      </form>
      <hr class="divider">
      <div class="newwin d-flex justify-content-end align-items-center"><svg class="i16"><use href="#newwin"/></svg><a href="#">Neues phpMyAdmin-Fenster</a></div>
    </main>
  </div>

  <!-- Statusleiste -->
  <div class="statusbar chrome d-flex align-items-center">
    <div class="stat first"></div><div class="stat"></div><div class="stat"></div><div class="stat"></div><div class="stat"></div><div class="stat"></div><div class="stat"></div>
    <div class="zone d-flex align-items-center"><svg class="i16"><use href="#globe-net"/></svg><span>Lokales Intranet</span></div>
    <div class="zoom d-flex align-items-center"><svg class="i12"><use href="#zoomi"/></svg><span>100%</span><div class="caret-d ml16"></div></div>
    <svg class="grip" height="12" width="10"><path d="M8 2h2v2H8zM5 5h2v2H5zM8 5h2v2H8zM2 8h2v2H2zM5 8h2v2H5zM8 8h2v2H8z" fill="#b8b5a5"/></svg>
  </div>

  <!-- Taskleiste -->
  <div class="taskbar chrome d-flex align-items-center">
    <div class="start d-flex align-items-center"><svg width="20" height="18"><path d="M2 3q3-2 6 0l-1 5q-3-2-6 0z" fill="#e8441c"/><path d="M9 3q3 2 7 0l-1 5q-3 2-7 0z" fill="#7cc23a"/><path d="M1 9q3-2 6 0l-1 6q-3-2-6 0z" fill="#3a88e8"/><path d="M8 9q3 2 7 0l-1 6q-3 2-7 0z" fill="#f8c828"/></svg><span>Start</span></div>
    <div class="quick d-flex align-items-center">
      <svg class="i16"><use href="#q1"/></svg><svg class="i16"><use href="#q2"/></svg><svg class="i16"><use href="#ie"/></svg><svg class="i16"><use href="#q4"/></svg><svg class="i16"><use href="#globe-net"/></svg><svg class="i16"><use href="#fp"/></svg><svg class="i16"><use href="#q7"/></svg><svg class="i16"><use href="#q8"/></svg><svg class="i16"><use href="#q9"/></svg><svg class="i16"><use href="#q10"/></svg><svg class="i16"><use href="#q11"/></svg><svg class="i16"><use href="#q12"/></svg><svg class="i16"><use href="#palette"/></svg><svg class="i16"><use href="#q14"/></svg><svg class="i16"><use href="#q15"/></svg><svg class="i16"><use href="#q16"/></svg><svg class="i16"><use href="#q17"/></svg><svg class="i16"><use href="#q18"/></svg><svg class="i16"><use href="#power"/></svg><svg class="i16"><use href="#q20"/></svg><svg class="i16"><use href="#q21"/></svg><svg class="i16"><use href="#q22"/></svg>
    </div>
    <div class="tasks d-flex">
      <div class="tb-btn d-flex align-items-center"><svg class="i16"><use href="#folder"/></svg><span><b>7</b> Windows …</span><i class="caret-w"></i></div>
      <div class="tb-btn d-flex align-items-center"><svg class="i16"><use href="#bolt"/></svg><span>4. Mike Oldfi…</span></div>
      <div class="tb-btn d-flex align-items-center"><svg class="i16"><use href="#fp"/></svg><span>Microsoft Fro…</span></div>
      <div class="tb-btn on d-flex align-items-center"><svg class="i16"><use href="#ie"/></svg><span><b>9</b> Internet …</span><i class="caret-w"></i></div>
      <div class="tb-btn d-flex align-items-center"><svg class="i16"><use href="#palette"/></svg><span>Paint Shop Pro</span></div>
      <div class="tb-btn d-flex align-items-center"><svg class="i16"><use href="#fox"/></svg><span>Microsoft Vis…</span></div>
    </div>
    <span class="dim">Arbeitsplatz</span><span class="raq">»</span><span class="lang text-center">DE</span>
    <div class="tray d-flex align-items-center">
      <div class="chev d-flex align-items-center justify-content-center"><svg width="8" height="9"><path d="M5.500 1 2 4.500 5.500 8" fill="none" stroke="#fff" stroke-width="2"/></svg></div>
      <svg class="i16"><use href="#power"/></svg><svg class="i16"><use href="#shield"/></svg><span class="ml3">12:54</span>
    </div>
  </div>
</div>
<script src="https://cdn.jsdelivr.net/npm/bootstrap@5.3.0/dist/js/bootstrap.bundle.min.js"></script>
</body>
</html>
